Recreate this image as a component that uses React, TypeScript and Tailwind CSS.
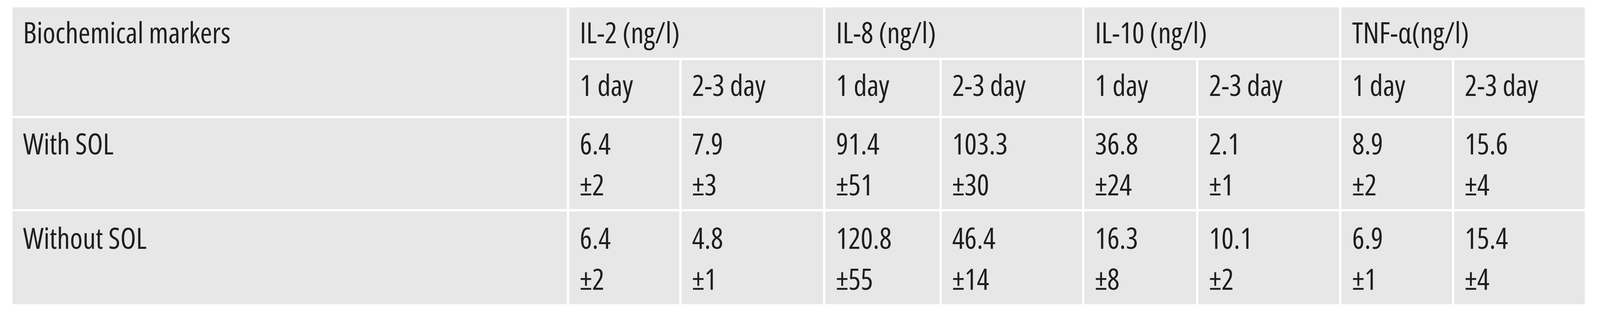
type Measure = {
  value: string;
  spread: string;
};

type Row = {
  label: string;
  pad: string;
  cells: Measure[];
};

const MARKERS = ["IL-2 (ng/l)", "IL-8 (ng/l)", "IL-10 (ng/l)", "TNF-α(ng/l)"];

const ROWS: Row[] = [
  {
    label: "With SOL",
    pad: "pt-[12px]",
    cells: [
      { value: "6.4", spread: "±2" },
      { value: "7.9", spread: "±3" },
      { value: "91.4", spread: "±51" },
      { value: "103.3", spread: "±30" },
      { value: "36.8", spread: "±24" },
      { value: "2.1", spread: "±1" },
      { value: "8.9", spread: "±2" },
      { value: "15.6", spread: "±4" },
    ],
  },
  {
    label: "Without SOL",
    pad: "pt-[15px]",
    cells: [
      { value: "6.4", spread: "±2" },
      { value: "4.8", spread: "±1" },
      { value: "120.8", spread: "±55" },
      { value: "46.4", spread: "±14" },
      { value: "16.3", spread: "±8" },
      { value: "10.1", spread: "±2" },
      { value: "6.9", spread: "±1" },
      { value: "15.4", spread: "±4" },
    ],
  },
];

const cell = "bg-[#e7e7e7] pl-[27px]";

export default function App() {
  return (
    <div className="bg-white pl-[32px] pr-[39px] pt-[19px] pb-[20px] font-['Open_Sans','Liberation_Sans',sans-serif] font-stretch-condensed text-[74px] leading-[105px] text-[#1e1e1e]">
      <div className="grid grid-cols-[1754fr_348fr_448fr_360fr_444fr_354fr_445fr_349fr_413fr] grid-rows-[129px_143px_233px_238px] gap-x-[6px] gap-y-[6px] bg-white">
        <div className={`${cell} row-span-2 pt-[11px]`}>Biochemical markers</div>
        {MARKERS.map((marker) => (
          <div key={marker} className={`${cell} col-span-2 pt-[11px]`}>
            {marker}
          </div>
        ))}
        {MARKERS.map((marker) => (
          <div key={`${marker}-days`} className="contents">
            <div className={`${cell} pt-[11px]`}>1 day</div>
            <div className={`${cell} pt-[11px]`}>2-3 day</div>
          </div>
        ))}
        {ROWS.map((row) => (
          <div key={row.label} className="contents">
            <div className={`${cell} ${row.pad}`}>{row.label}</div>
            {row.cells.map((item, index) => (
              <div key={index} className={`${cell} ${row.pad}`}>
                <div>{item.value}</div>
                <div>{item.spread}</div>
              </div>
            ))}
          </div>
        ))}
      </div>
    </div>
  );
}
